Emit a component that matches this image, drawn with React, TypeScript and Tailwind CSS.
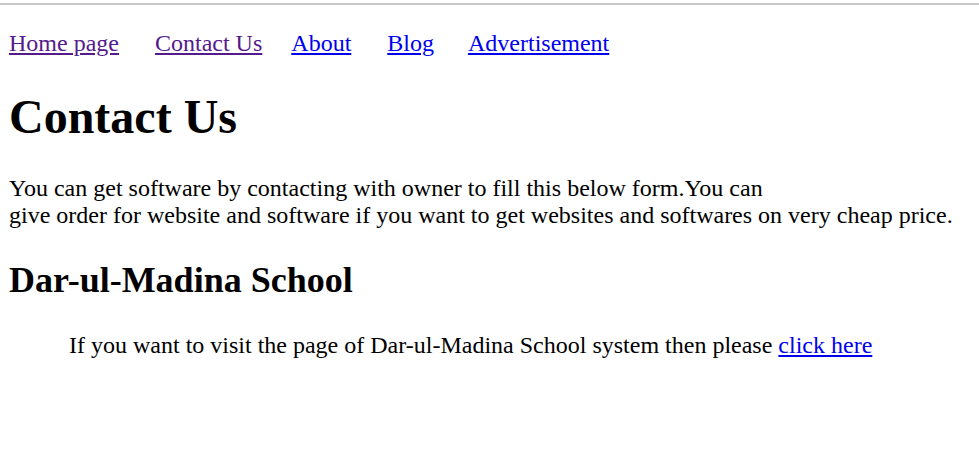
export default function App() {
  return (
    <div className="min-h-[451px] bg-white font-['Liberation_Serif','Times_New_Roman',serif] text-[24px] leading-[normal] text-black">
      <div className="h-[3px]" />
      <div className="h-[2px] bg-[#c8c8c8]" />

      <div className="pl-[9px] pr-2">
        <nav className="mt-[25px] flex items-baseline">
          <a href="#" className="text-[#551a8b] underline">Home page</a>
          <a href="#" className="ml-[36px] text-[#551a8b] underline">Contact Us</a>
          <a href="#" className="ml-[29px] text-[#0000ee] underline">About</a>
          <a href="#" className="ml-[36px] text-[#0000ee] underline">Blog</a>
          <a href="#" className="ml-[34px] text-[#0000ee] underline">Advertisement</a>
        </nav>

        <h1 className="mt-[32px] text-[48px] font-bold leading-[normal]">Contact Us</h1>

        <p className="mt-[31px]">
          You can get software by contacting with owner to fill this below form.You can
          <br />
          give order for website and software if you want to get websites and softwares on very cheap price.
        </p>

        <h2 className="mt-[30px] text-[36px] font-bold leading-[normal]">Dar-ul-Madina School</h2>

        <p className="mt-[31px] pl-[60px]">
          If you want to visit the page of Dar-ul-Madina School system then please{" "}
          <a href="#" className="text-[#0000ee] underline">click here</a>
        </p>
      </div>
    </div>
  );
}
